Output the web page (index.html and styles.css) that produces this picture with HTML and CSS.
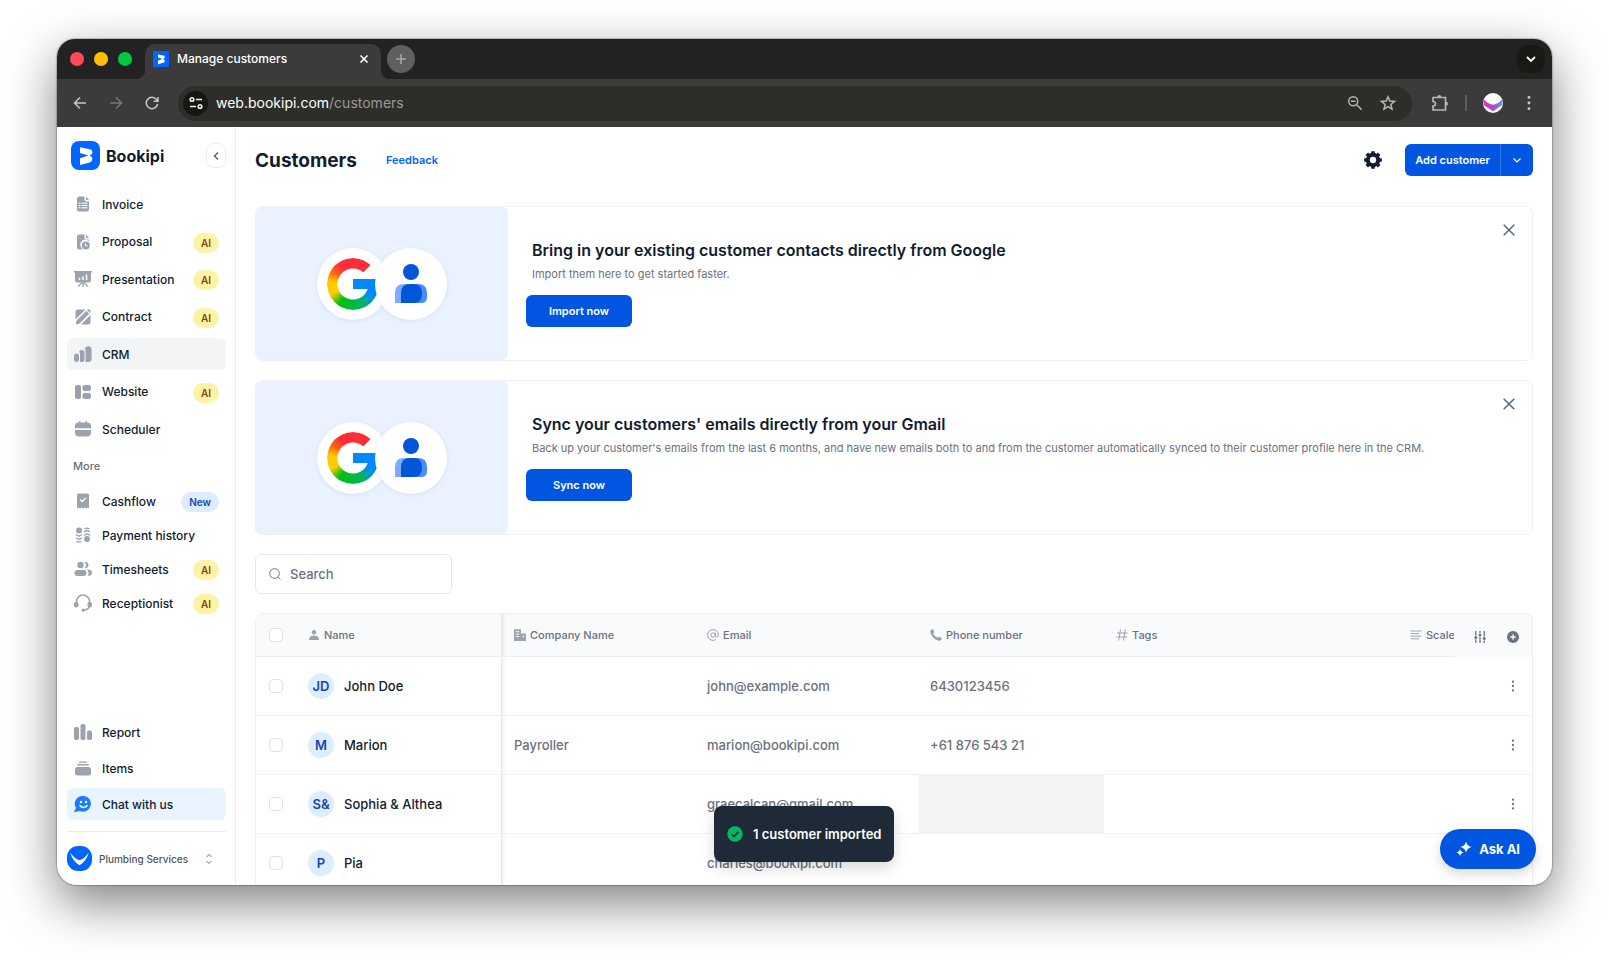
FILE: index.html
```html
<!DOCTYPE html>
<html lang="en">
<head>
<meta charset="utf-8">
<title>Manage customers</title>
<link rel="stylesheet" href="styles.css">
</head>
<body>
<svg class="defs" aria-hidden="true">
  <symbol id="dots" viewBox="0 0 16 16"><circle cx="8" cy="3" r="1.3"/><circle cx="8" cy="8" r="1.3"/><circle cx="8" cy="13" r="1.3"/></symbol>
  <symbol id="mark" viewBox="0 0 29 29"><path fill="#fff" d="M9 6.2 19 8.2Q21.600 8.800 21.500 11.300 21.300 13.800 18.200 14.400 21.200 15.200 21.300 17.900 21.300 20.800 18.800 21.500L9 23.900V17.200L17.500 14.500 9 12Z"/></symbol>
  <symbol id="people" viewBox="0 0 36 40"><circle cx="18" cy="8" r="8" fill="#0056d6"/><path fill="#7faaff" d="M2 39V29q0-9 9-9h8v19z"/><path fill="#4a8cff" d="M17 20h8q9 0 9 9v4q0 6-6 6H17z"/><path fill="#0056d6" d="M8 39V29q0-9 9-9h3q9 0 9 9v1q0 9-9 9z"/></symbol>
</svg>
<div class="window">
  <div class="tabs">
    <div class="lights"><i class="red"></i><i class="amber"></i><i class="green"></i></div>
    <div class="tab">
      <svg class="favicon" viewBox="0 0 29 29"><path fill="#0066ff" d="M0 0h29v29H0z"/><use href="#mark"/></svg>
      <span>Manage customers</span>
      <button class="plain" aria-label="Close tab"><svg width="10" height="10" viewBox="0 0 10 10" stroke="#fff" stroke-width="1.600"><path d="M1.500 1.500l7 7M8.500 1.500l-7 7"/></svg></button>
    </div>
    <button class="new-tab" aria-label="New tab"><svg width="12" height="12" viewBox="0 0 12 12" stroke="#a8a8a8" stroke-width="1.500"><path d="M6 1v10M1 6h10"/></svg></button>
    <button class="tab-search" aria-label="Search tabs"><svg width="10" height="10" viewBox="0 0 10 10" fill="none" stroke="#fff" stroke-width="1.800"><path d="M1 3l4 4 4-4"/></svg></button>
  </div>
  <div class="toolbar">
    <button class="plain" aria-label="Back"><svg width="14" height="14" viewBox="0 0 14 14" fill="none" stroke="#c8c8c8" stroke-width="1.500"><path d="M13 7H2M7 1.500L1.500 7 7 12.500"/></svg></button>
    <button class="plain" aria-label="Forward"><svg width="14" height="14" viewBox="0 0 14 14" fill="none" stroke="#777" stroke-width="1.500"><path d="M1 7h11M7 1.500L12.500 7 7 12.500"/></svg></button>
    <button class="plain" aria-label="Reload"><svg width="14" height="14" viewBox="0 0 14 14" fill="none" stroke="#c8c8c8" stroke-width="1.500"><path d="M12.600 8A5.700 5.700 0 1 1 11.500 3.500L12.800 5M13 1v4.300H8.600"/></svg></button>
    <div class="address">
      <button class="site" aria-label="Site information"><svg width="14" height="14" viewBox="0 0 14 14" fill="none" stroke="#eee" stroke-width="1.600"><circle cx="3" cy="3.500" r="1.800"/><path d="M7 3.500h6M1 10.500h6"/><circle cx="11" cy="10.500" r="1.800"/></svg></button>
      <span class="url">web.bookipi.com<span>/customers</span></span>
      <button class="plain" aria-label="Zoom"><svg width="16" height="16" viewBox="0 0 16 16" fill="none" stroke="#b5b5b5" stroke-width="1.500"><circle cx="6.200" cy="6.200" r="4.500"/><path d="M9.700 9.700l5 5M4 6.200h4.400"/></svg></button>
      <button class="plain" aria-label="Bookmark"><svg width="16" height="16" viewBox="0 0 16 16" fill="none" stroke="#b5b5b5" stroke-width="1.500"><path d="M8 1.800l1.800 4.300 4.700.4-3.600 3 1.100 4.600L8 11.600l-4 2.500 1.100-4.600-3.600-3 4.700-.4z"/></svg></button>
    </div>
    <button class="plain ext" aria-label="Extensions"><svg width="18" height="18" viewBox="0 0 18 18" fill="none" stroke="#b5b5b5" stroke-width="1.700"><path d="M2 3.500h12.500V16H2v-4q2.500-.2 2.500-2.200T2 7.500z"/><path fill="#b5b5b5" stroke="none" d="M6.300 3a2 2 0 0 1 4 0zM15 7.800a2 2 0 0 1 0 4z"/></svg></button>
    <i class="bar"></i>
    <button class="plain" aria-label="Profile"><svg width="20" height="20" viewBox="0 0 20 20"><defs><linearGradient id="pg"><stop stop-color="#ec2fc0"/><stop offset=".5" stop-color="#a44ad0"/><stop offset="1" stop-color="#6a9be0"/></linearGradient></defs><circle cx="10" cy="10" r="10" fill="#fff"/><path fill="url(#pg)" d="M.7 6Q4 10.500 10 11.800 16 10.500 19.300 6 20.200 9.500 18.700 12.500L10 18.300 1.300 12.500Q-.2 9.500 .7 6z"/></svg></button>
    <button class="plain" aria-label="Browser menu"><svg width="18" height="18" fill="#c8c8c8"><use href="#dots"/></svg></button>
  </div>

  <div class="app">
    <aside class="sidebar">
      <div class="brand">
        <svg width="29" height="29" viewBox="0 0 29 29"><rect width="29" height="29" rx="8" fill="#0066ff"/><use href="#mark"/></svg>
        <strong>Bookipi</strong>
        <button class="collapse" aria-label="Collapse sidebar"><svg width="8" height="10" viewBox="0 0 8 10" fill="none" stroke="#4b5563" stroke-width="1.300"><path d="M6 1.500L2.500 5 6 8.500"/></svg></button>
      </div>
      <nav class="nav main-nav">
        <a href="#"><svg viewBox="0 0 18 18"><path d="M5 1.500h5.500v3a2 2 0 0 0 2 2H15V14.500a2 2 0 0 1-2 2H5a2 2 0 0 1-2-2v-11a2 2 0 0 1 2-2zM12 1.500L15 5h-2.200a.8.800 0 0 1-.8-.8z"/><path stroke="#fff" stroke-width="1" d="M4.500 8.200h2M7.500 8.200h6M4.500 10.500h2M7.500 10.500h6M4.500 12.800h2M7.500 12.800h6"/></svg>Invoice</a>
        <a href="#"><svg viewBox="0 0 18 18"><path d="M5 1.500h5.500v3a2 2 0 0 0 2 2H15v1.800a5 5 0 0 0-7.500 6.700l.8 1.500H5a2 2 0 0 1-2-2v-11a2 2 0 0 1 2-2zM12 1.500L15 5h-2.200a.8.800 0 0 1-.8-.8z"/><circle cx="11.800" cy="12.600" r="4"/><path fill="none" stroke="#fff" d="M11.500 10.300v2.500h2.200"/></svg>Proposal<em class="ai">AI</em></a>
        <a href="#"><svg viewBox="0 0 18 18"><path d="M0 1h18v1.500h-1V10a2.500 2.500 0 0 1-2.500 2.500h-11A2.500 2.500 0 0 1 1 10V2.500H0zM8.300 12h1.400v5H8.300z"/><path fill="none" stroke="#9ca3af" stroke-width="1.400" d="M4 16.500l4-4M14 16.500l-4-4"/><path stroke="#fff" stroke-width="1.500" d="M5.500 10V7.800M9 10V6.500M12.500 10V4.500"/></svg>Presentation<em class="ai">AI</em></a>
        <a href="#"><svg viewBox="0 0 18 18"><path d="M4 1.500h7.500L1.500 11.500V4A2.500 2.500 0 0 1 4 1.500zM16.500 7v7a2.500 2.500 0 0 1-2.500 2.500H7zM12.300 2.800l2.900 2.900L5.500 15.400l-3.800 1 .9-3.900zM13 2a2 2 0 0 1 3 3z"/></svg>Contract<em class="ai">AI</em></a>
        <a href="#" class="current"><svg viewBox="0 0 18 18"><rect x="0" y="8.500" width="5" height="8.500" rx="2.400"/><path d="M5 6.500Q5.700 5 7.600 5q2.900 0 2.900 2.900v6.300q0 2.800-2.800 2.800H6V9q0-1.400-1-2.500zM10.800 3.500Q11.800 1.200 14.200 1.200 17.600 1.200 17.600 4.600v9.100Q17.600 17 14.200 17h-2.600V6.500q0-1.800-.8-3z"/></svg>CRM</a>
        <a href="#"><svg viewBox="0 0 18 18"><rect x="1" y="2" width="6" height="14" rx="2"/><rect x="8.500" y="2" width="8.500" height="6" rx="2"/><rect x="8.500" y="10" width="8.500" height="6" rx="2"/></svg>Website<em class="ai">AI</em></a>
        <a href="#"><svg viewBox="0 0 18 18"><rect x="5" y="1" width="1.500" height="4" rx=".7"/><rect x="11.500" y="1" width="1.500" height="4" rx=".7"/><path d="M5 2.500h8q4 0 4 3v2.700H1V5.500q0-3 4-3zM1 10h16v2.500q0 4-4 4H5q-4 0-4-4z"/></svg>Scheduler</a>
      </nav>
      <h2>More</h2>
      <nav class="nav">
        <a href="#"><svg viewBox="0 0 18 18"><path d="M4.500 1.500h9A1.500 1.500 0 0 1 15 3v13.500l-1.500-1-1.500 1-1.500-1-1.500 1-1.500-1-1.500 1-1.500-1-1.500 1V3a1.500 1.500 0 0 1 1.500-1.500z"/><path fill="none" stroke="#fff" stroke-width="1.300" d="M6.300 7.500l2 2 3.600-3.600"/></svg>Cashflow<em class="new">New</em></a>
        <a href="#"><svg viewBox="0 0 18 18"><circle cx="5" cy="4.500" r="3"/><circle cx="13" cy="13" r="3"/><path fill="none" stroke="#9ca3af" stroke-width="1.300" d="M2 8.500q3 3 6 0M2 12q3 2.500 6 0M2.500 15.500q2.500 1 5 0M10.500 3q2.500-1.500 5 0M10 6q3-2.500 6 0M10 9.500q3-3 6 0"/></svg>Payment history</a>
        <a href="#"><svg viewBox="0 0 18 18"><circle cx="6.500" cy="5" r="3.200"/><rect x=".5" y="10" width="12" height="6" rx="3"/><path d="M10.500 1.900a3.200 3.200 0 1 1 0 6.200 4.500 4.500 0 0 0 0-6.200zM12.500 9.500h1.500q4 .3 4 3.300 0 2.700-3 3h-1.500a4 4 0 0 0-1-6.300z"/></svg>Timesheets<em class="ai">AI</em></a>
        <a href="#"><svg viewBox="0 0 18 18"><path fill="none" stroke="#9ca3af" stroke-width="1.500" d="M2.500 9V7.500a6.500 6.500 0 0 1 13 0V11q0 4.500-5.500 5"/><rect x="0" y="8" width="4.500" height="5.500" rx="2"/><rect x="13.500" y="8" width="4.500" height="5.500" rx="2"/><circle cx="9.200" cy="16.200" r="1.600"/></svg>Receptionist<em class="ai">AI</em></a>
      </nav>
      <nav class="nav foot-nav">
        <a href="#"><svg viewBox="0 0 18 18"><rect x="0" y="4" width="5" height="13" rx="1.800"/><rect x="6.500" y="1" width="5" height="16" rx="1.800"/><rect x="13" y="7.500" width="5" height="9.500" rx="1.800"/></svg>Report</a>
        <a href="#"><svg viewBox="0 0 18 18"><rect x="5" y="2.500" width="8" height="1.300" rx=".6"/><rect x="3" y="5" width="12" height="1.500" rx=".7"/><rect x="1" y="8" width="16" height="8.500" rx="2.500"/></svg>Items</a>
        <a href="#" class="chat"><svg viewBox="0 0 18 18"><path fill="#1a7cff" d="M9.500 1a7.800 7.800 0 1 1-3.600 14.900L0 17.200l1.900-4.500A7.800 7.800 0 0 1 9.500 1z"/><circle cx="7" cy="7" r="1.200" fill="#fff"/><circle cx="12" cy="7" r="1.200" fill="#fff"/><path fill="none" stroke="#fff" stroke-width="1.400" stroke-linecap="round" d="M5.800 10.500q3.700 4 7.400 0"/></svg>Chat with us</a>
      </nav>
      <button class="account">
        <svg width="25" height="25" viewBox="0 0 25 25"><rect width="25" height="25" rx="11" fill="#0066ff"/><path fill="#fff" d="M3.300 6.500Q7.500 13 12.500 14.300 17.500 13 21.700 6.500 20 14.500 12.500 19.300 5 14.500 3.300 6.500z"/></svg>
        <span>Plumbing Services</span>
        <svg width="8" height="12" viewBox="0 0 8 12" fill="none" stroke="#6b7280"><path d="M1.500 4L4 1.500 6.500 4M1.500 8L4 10.500 6.500 8"/></svg>
      </button>
    </aside>

    <main>
      <header>
        <h1>Customers</h1>
        <a class="feedback" href="#">Feedback</a>
        <button class="plain gear" aria-label="Settings"><svg width="18" height="18" viewBox="0 0 18 18"><circle cx="9" cy="9" r="5.200" fill="none" stroke="#111c2e" stroke-width="4"/><path stroke="#111c2e" stroke-width="3.600" d="M9 .2V3M9 15v2.800M.2 9H3M15 9h2.800M2.800 2.800l2 2M13.200 13.200l2 2M15.200 2.800l-2 2M4.800 13.200l-2 2"/></svg></button>
        <div class="split"><button>Add customer</button><button aria-label="More ways to add"><svg width="10" height="10" viewBox="0 0 10 10" fill="none" stroke="#fff" stroke-width="1.200"><path d="M1.500 3.500L5 7l3.500-3.500"/></svg></button></div>
      </header>

      <section class="banner">
        <div class="art"><div class="disc"><div class="g"></div></div><div class="disc"><svg width="36" height="40"><use href="#people"/></svg></div></div>
        <div class="copy"><h3>Bring in your existing customer contacts directly from Google</h3><p>Import them here to get started faster.</p><button class="primary">Import now</button></div>
        <button class="plain close" aria-label="Dismiss"><svg width="12" height="12" viewBox="0 0 12 12" stroke="#4f6b80" stroke-width="1.500"><path d="M.7.7l10.600 10.600M11.300.7L.7 11.300"/></svg></button>
      </section>
      <section class="banner">
        <div class="art"><div class="disc"><div class="g"></div></div><div class="disc"><svg width="36" height="40"><use href="#people"/></svg></div></div>
        <div class="copy"><h3>Sync your customers' emails directly from your Gmail</h3><p>Back up your customer's emails from the last 6 months, and have new emails both to and from the customer automatically synced to their customer profile here in the CRM.</p><button class="primary">Sync now</button></div>
        <button class="plain close" aria-label="Dismiss"><svg width="12" height="12" viewBox="0 0 12 12" stroke="#4f6b80" stroke-width="1.500"><path d="M.7.7l10.600 10.600M11.300.7L.7 11.300"/></svg></button>
      </section>

      <label class="search"><svg width="12" height="12" viewBox="0 0 12 12" fill="none" stroke="#6b7280"><circle cx="5.500" cy="5.500" r="4.800"/><path d="M9 9l2.500 2.500"/></svg><input type="search" placeholder="Search" aria-label="Search"></label>

      <div class="table-box">
        <table>
          <colgroup><col class="c-check"><col class="c-name"><col class="c-company"><col class="c-email"><col class="c-phone"><col><col class="c-scale"><col class="c-act"></colgroup>
          <thead><tr>
            <th class="check"><input type="checkbox" aria-label="Select all"></th>
            <th class="name"><span class="h"><svg viewBox="0 0 12 12"><circle cx="6" cy="3.200" r="2.200"/><path d="M1 11q0-4.500 5-4.500t5 4.500z"/></svg>Name</span></th>
            <th class="shade"><span class="h"><svg viewBox="0 0 12 12"><path d="M0 1q0-.8.800-.8h5.400q.8 0 .8.800v3.500h4q1 0 1 1V12H0z"/><path stroke="#f9fafb" d="M1.800 2.800h3.400M1.800 5.200h3.400M1.800 7.600h3.400M8.500 7.500h1.800"/></svg>Company Name</span></th>
            <th><span class="h"><svg viewBox="0 0 12 12" fill="none" stroke="#9ca3af"><circle cx="6" cy="6" r="2.200"/><path d="M8.200 3.700v3q0 1.500 1.500 1.500 1.700-.3 1.700-2.200A5.400 5.400 0 1 0 9 10.500"/></svg>Email</span></th>
            <th><span class="h"><svg viewBox="0 0 12 12"><path d="M.8 1Q2 0 3 .3l1.300 2.500q.2.500-.3 1l-.8.800q1.200 2.700 4.200 4.200l.8-.8q.5-.5 1-.3L11.700 9q.3 1-.7 2.200-1.500 1-4.500-.2Q2.500 9 .8 5-.3 2.200.8 1z"/></svg>Phone number</span></th>
            <th><span class="h"><svg viewBox="0 0 12 12" fill="none" stroke="#9ca3af"><path d="M4.500.5L2.700 11.500M9.300.5L7.500 11.500M1 4h10.500M.5 8h10.500"/></svg>Tags</span></th>
            <th class="scale"><span class="h"><svg viewBox="0 0 12 12" stroke="#9ca3af"><path d="M.5 2h11M.5 4.600h8.500M.5 7.200h11M.5 9.800h8.500"/></svg>Scale</span></th>
            <th class="tools"><div><button class="plain" aria-label="Table columns"><svg width="12" height="12" viewBox="0 0 12 12" stroke="#6b7280" stroke-width="1.300"><path d="M1.800 0v4.500M1.800 8.500V12M6 0v2M6 6v6M10.200 0v5.500M10.200 9.500V12"/><g fill="#6b7280" stroke="none"><circle cx="1.800" cy="6.500" r="1.500"/><circle cx="6" cy="4" r="1.500"/><circle cx="10.200" cy="7.500" r="1.500"/></g></svg></button><button class="plain" aria-label="Add column"><svg width="12" height="12" viewBox="0 0 12 12"><circle cx="6" cy="6" r="6" fill="#6b7280"/><path stroke="#fff" stroke-width="1.300" d="M6 3.300v5.400M3.300 6h5.400"/></svg></button></div></th>
          </tr></thead>
          <tbody>
            <tr><td class="check"><input type="checkbox" aria-label="Select John Doe"></td><td class="name"><span class="who"><i>JD</i>John Doe</span></td><td class="shade"></td><td>john@example.com</td><td>6430123456</td><td></td><td></td><td class="act"><button class="plain" aria-label="Row menu"><svg width="14" height="14" fill="#6b7280"><use href="#dots"/></svg></button></td></tr>
            <tr><td class="check"><input type="checkbox" aria-label="Select Marion"></td><td class="name"><span class="who"><i>M</i>Marion</span></td><td class="shade">Payroller</td><td>marion@bookipi.com</td><td>+61 876 543 21</td><td></td><td></td><td class="act"><button class="plain" aria-label="Row menu"><svg width="14" height="14" fill="#6b7280"><use href="#dots"/></svg></button></td></tr>
            <tr><td class="check"><input type="checkbox" aria-label="Select Sophia &amp; Althea"></td><td class="name"><span class="who"><i>S&amp;</i>Sophia &amp; Althea</span></td><td class="shade"></td><td>graecalcan@gmail.com</td><td class="hover"></td><td></td><td></td><td class="act"><button class="plain" aria-label="Row menu"><svg width="14" height="14" fill="#6b7280"><use href="#dots"/></svg></button></td></tr>
            <tr><td class="check"><input type="checkbox" aria-label="Select Pia"></td><td class="name"><span class="who"><i>P</i>Pia</span></td><td class="shade"></td><td>charles@bookipi.com</td><td></td><td></td><td></td><td class="act"></td></tr>
          </tbody>
        </table>
      </div>
    </main>

    <div class="toast" role="status"><svg width="16" height="16" viewBox="0 0 16 16"><circle cx="8" cy="8" r="7.700" fill="#05b85f"/><path fill="none" stroke="#1e2a37" stroke-width="1.700" d="M4.500 8.200L7 10.600l4.500-4.800"/></svg>1 customer imported</div>
    <button class="ask"><svg width="16" height="16" viewBox="0 0 16 16" fill="#fff"><path d="M10 .5Q11 5 15.500 6 11 7 10 11.500 9 7 4.500 6 9 5 10 .5zM4 7.800Q4.600 10.900 7.700 11.500 4.600 12.100 4 15.200 3.400 12.100.3 11.500 3.400 10.900 4 7.800z"/></svg>Ask AI</button>
  </div>
</div>
</body>
</html>
```
FILE: styles.css
```css
* { box-sizing: border-box; }
body {
  margin: 0;
  height: 100vh;
  padding: 39px 57px 75px;
  background: #fff;
  font-family: Inter, "Liberation Sans", sans-serif;
  font-size: 12px;
  color: #111c2e;
  overflow: hidden;
}
.defs { position: absolute; width: 0; height: 0; }
button { font: inherit; cursor: pointer; border: 0; padding: 0; }
a { color: inherit; text-decoration: none; }
svg { flex: none; display: block; }
.plain { background: none; display: flex; }

.window {
  height: 100%;
  display: flex;
  flex-direction: column;
  border-radius: 18px 18px 20px 20px;
  overflow: hidden;
  background: #fff;
  box-shadow: 0 0 1px 1px rgba(0, 0, 0, .22), 0 18px 50px rgba(0, 0, 0, .5);
}

/* Browser chrome */
.tabs {
  display: flex;
  align-items: center;
  flex: none;
  height: 40px;
  padding: 0 7px 0 13px;
  background: #222;
  color: #fff;
}
.lights { display: flex; gap: 10px; }
.lights i { width: 14px; height: 14px; border-radius: 50%; }
.red { background: #ff4a57; }
.amber { background: #ffc000; }
.green { background: #00c940; }
.tab {
  position: relative;
  align-self: flex-end;
  display: flex;
  align-items: center;
  gap: 8px;
  width: 236px;
  height: 35px;
  margin-left: 13px;
  padding: 0 12px 6px 8px;
  border-radius: 10px 10px 0 0;
  background: #3b3b3b;
  font-size: 12px;
  font-weight: 500;
}
.tab::before, .tab::after {
  content: "";
  position: absolute;
  bottom: 0;
  width: 10px;
  height: 10px;
}
.tab::before { right: 100%; background: radial-gradient(circle at 0 0, #222 10px, #3b3b3b 11px); }
.tab::after { left: 100%; background: radial-gradient(circle at 100% 0, #222 10px, #3b3b3b 11px); }
.tab span { flex: 1; }
.favicon { width: 16px; height: 16px; }
.new-tab, .tab-search { display: grid; place-items: center; width: 28px; height: 28px; border-radius: 50%; background: #5f5f5f; }
.new-tab { margin-left: 6px; }
.tab-search { margin-left: auto; border-radius: 10px; background: #191a15; }
.toolbar {
  display: flex;
  align-items: center;
  flex: none;
  gap: 22px;
  height: 48px;
  padding: 0 14px 0 16px;
  background: #3b3b3b;
}
.address {
  flex: 1;
  display: flex;
  align-items: center;
  gap: 17px;
  height: 35px;
  margin-left: -3px;
  padding: 0 16px 0 5px;
  border-radius: 18px;
  background: #2d2e29;
}
.site { display: grid; place-items: center; width: 25px; height: 25px; border-radius: 50%; background: #161712; }
.url { flex: 1; margin-left: -9px; font-size: 14px; line-height: 20px; color: #fff; }
.url span { color: #9a9a97; }
.ext { margin-left: -3px; }
.bar { width: 2px; height: 16px; margin: 0 -6px; background: #5e5e5e; }
.toolbar .bar + .plain { margin-right: -5px; }

/* Application frame */
.app { position: relative; flex: 1; min-height: 0; display: flex; }
.sidebar {
  display: flex;
  flex-direction: column;
  width: 179px;
  flex: none;
  padding: 14px 9px 14px 10px;
  border-right: 1px solid #eceef1;
}
.brand { display: flex; align-items: center; gap: 6px; padding-left: 4px; }
.brand strong { flex: 1; font-size: 16px; font-weight: 700; }
.collapse { display: grid; place-items: center; width: 20px; height: 25px; border: 1px solid #eceef1; border-radius: 7px; background: #fff; }
.nav { display: flex; flex-direction: column; gap: 2px; }
.nav a {
  display: flex;
  align-items: center;
  gap: 10px;
  height: 32px;
  padding: 0 7px;
  border-radius: 6px;
  font-weight: 500;
}
.nav svg { width: 18px; height: 18px; fill: #9ca3af; }
.main-nav { height: 257px; margin-top: 18px; gap: 0; justify-content: space-between; }
.current { background: #f3f4f6; }
.nav em { margin: 2px 0 0 auto; padding: 0 8px; border-radius: 10px; font-size: 10px; font-weight: 600; line-height: 20px; font-style: normal; }
.ai { background: #fef3a5; color: #83440f; }
.nav .new { background: #dcedff; color: #1744b5; }
.sidebar h2 { margin: 15px 0 12px 6px; font-size: 11px; line-height: 13px; font-weight: 500; color: #6b7280; }
.foot-nav { margin-top: auto; gap: 4px; }
.chat { background: #e8f4ff; }
.account {
  display: flex;
  align-items: center;
  gap: 7px;
  margin-top: 11px;
  padding: 14px 13px 0 0;
  border-top: 1px solid #e9ebee;
  background: none;
  font-size: 10px;
  font-weight: 500;
  color: #4b5563;
  text-align: left;
}
.account span { flex: 1; white-space: nowrap; }

main { flex: 1; min-width: 0; padding: 17px 19px 0; overflow: hidden; }
header { display: flex; align-items: center; height: 32px; margin-bottom: 30px; }
h1 { margin: 0; font-size: 19px; font-weight: 700; }
.feedback { margin-left: 29px; font-size: 11px; font-weight: 600; color: #0068f5; }
.gear { margin-left: auto; }
.split { display: flex; height: 32px; margin-left: 23px; border-radius: 6px; overflow: hidden; }
.split button { display: grid; place-items: center; padding: 0 10px; background: #0056e0; color: #fff; font-size: 11px; font-weight: 600; }
.split button + button { width: 33px; border-left: 1px solid #2f7bf0; }
.banner {
  display: flex;
  height: 155px;
  margin-bottom: 19px;
  border: 1px solid #f0f1f3;
  border-radius: 7px;
}
.art { display: flex; justify-content: center; align-items: center; flex: none; width: 252px; border-radius: 6px; background: #eaf2ff; }
.disc { position: relative; display: grid; place-items: center; width: 72px; height: 72px; border-radius: 50%; background: #fff; box-shadow: 0 1px 4px rgba(60, 100, 160, .12); }
.disc + .disc { z-index: 1; margin-left: -14px; }
.g {
  position: relative;
  width: 52px;
  height: 52px;
}
.g::before {
  content: "";
  position: absolute;
  inset: 0;
  border-radius: 50%;
  background: conic-gradient(#ff2d35 0 42deg, transparent 42deg 84deg, #0088ff 84deg 120deg, #00b560 155deg, #00c010 215deg, #ffcc00 245deg 275deg, #ff6a10 300deg, #ff2d35 325deg);
  -webkit-mask: radial-gradient(circle, transparent 15px, #000 16px);
  mask: radial-gradient(circle, transparent 15px, #000 16px);
}
.g::after { content: ""; position: absolute; left: 26px; top: 21px; width: 25px; height: 10px; background: #0088ff; }
.copy { flex: 1; min-width: 0; padding: 33px 0 0 24px; }
h3 { margin: 0 0 5px; font-size: 16px; line-height: 20px; font-weight: 600; }
.copy p { margin: 0 0 12px; font-size: 11px; line-height: 18px; color: #6b7280; white-space: nowrap; }
.primary { width: 106px; height: 32px; margin-left: -6px; border-radius: 6px; background: #0056e0; color: #fff; font-size: 11px; font-weight: 600; }
.close { align-self: flex-start; padding: 17px 17px 0 0; }

.search {
  display: flex;
  align-items: center;
  gap: 9px;
  width: 197px;
  height: 40px;
  margin-bottom: 19px;
  padding: 0 13px;
  border: 1px solid #e5e7eb;
  border-radius: 6px;
}
.search input { width: 100%; border: 0; outline: 0; padding: 0; background: none; font: 500 13px Inter, sans-serif; }
.search input::placeholder { color: #6b7280; opacity: 1; }

.table-box { border: 1px solid #eceef1; border-radius: 8px; overflow: hidden; }
table { width: 100%; table-layout: fixed; border-collapse: separate; border-spacing: 0; }
.c-check { width: 40px; }
.c-name { width: 206px; }
.c-company { width: 193px; }
.c-email { width: 223px; }
.c-phone { width: 186px; }
.c-scale { width: 54px; }
.c-act { width: 78px; }
th { height: 43px; padding: 0 0 0 12px; background: #f9fafb; border-bottom: 1px solid #eceef1; font-size: 11px; font-weight: 500; color: #6b7280; text-align: left; }
.h { display: flex; align-items: center; gap: 4px; white-space: nowrap; }
.h svg { width: 12px; height: 12px; fill: #9ca3af; }
.h svg[fill] { fill: none; }
td { height: 59px; padding: 0 0 0 12px; border-bottom: 1px solid #f0f1f3; font-size: 13px; font-weight: 500; color: #6b7280; }
.scale { padding-left: 10px; overflow: hidden; }
.name { border-right: 1px solid #e3e5e8; }
.shade { background-image: linear-gradient(90deg, rgba(0, 0, 0, .05), transparent 4px); }
.check { padding-left: 13px; }
.check input { appearance: none; display: block; width: 14px; height: 14px; margin: 0; border: 1px solid #dfe2e7; border-radius: 4px; background: #fff; }
.who { display: flex; align-items: center; gap: 10px; color: #111c2e; }
.who i { display: grid; place-items: center; width: 26px; height: 26px; border-radius: 50%; background: #dcedff; color: #1744b5; font-style: normal; font-weight: 600; }
.hover { background: #f3f4f6; }
.tools { border-bottom-color: transparent; }
.tools div { display: flex; justify-content: space-between; padding: 4px 13px 0 8px; }
.act .plain { margin: 0 12px 0 auto; }

.toast {
  position: absolute;
  left: 657px;
  bottom: 23px;
  display: flex;
  align-items: center;
  gap: 10px;
  height: 56px;
  padding: 0 13px;
  border-radius: 8px;
  background: #1e2a37;
  color: #fff;
  font-size: 13px;
  font-weight: 600;
  box-shadow: 0 6px 14px rgba(0, 0, 0, .15);
}
.ask {
  position: absolute;
  right: 16px;
  bottom: 16px;
  display: flex;
  align-items: center;
  gap: 7px;
  height: 40px;
  padding: 0 16px;
  border-radius: 20px;
  background: #0056e0;
  color: #fff;
  font-size: 13px;
  font-weight: 700;
  box-shadow: 0 5px 12px rgba(0, 0, 0, .15);
}
```
